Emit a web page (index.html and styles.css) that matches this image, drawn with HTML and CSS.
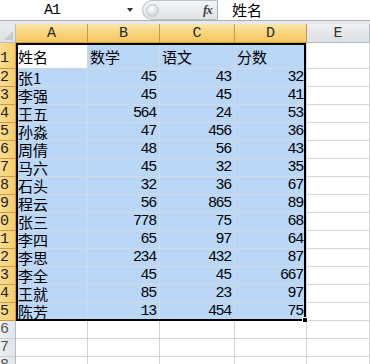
FILE: index.html
```html
<!DOCTYPE html>
<html lang="zh">
<head>
    <meta charset="UTF-8">
    <title>Sheet1</title>
    <link rel="stylesheet" href="styles.css">
</head>
<body>
    <div class="formula-bar">
        <div class="name-box">
            <span class="name-text">A1</span>
            <span class="drop-arrow"></span>
        </div>
        <div class="splitter">
            <span class="knob"></span>
            <span class="fx">fx</span>
        </div>
        <div class="formula-input">姓名</div>
    </div>
    <div class="stripe"></div>

    <div class="sheet" id="sheet">
        <div class="corner"><span class="corner-tri"></span></div>
        <div class="col-head sel">A</div>
        <div class="col-head sel">B</div>
        <div class="col-head sel">C</div>
        <div class="col-head sel">D</div>
        <div class="col-head">E</div>
    </div>

    <script>
        // Data for the selected range A1:D15
        const rows = [
            ['姓名', '数学', '语文', '分数'],
            ['张1', 45, 43, 32],
            ['李强', 45, 45, 41],
            ['王五', 564, 24, 53],
            ['孙淼', 47, 456, 36],
            ['周倩', 48, 56, 43],
            ['马六', 45, 32, 35],
            ['石头', 32, 36, 67],
            ['程云', 56, 865, 89],
            ['张三', 778, 75, 68],
            ['李四', 65, 97, 64],
            ['李思', 234, 432, 87],
            ['李全', 45, 45, 667],
            ['王就', 85, 23, 97],
            ['陈芳', 13, 454, 75]
        ];
        const totalRows = 18;
        const sheet = document.getElementById('sheet');

        function addCell(cls, text) {
            const cell = document.createElement('div');
            cell.className = cls;
            if (text !== undefined) cell.textContent = text;
            sheet.appendChild(cell);
        }

        for (let r = 0; r < totalRows; r++) {
            const data = rows[r];
            const inRange = !!data;
            addCell('row-head' + (inRange ? ' sel' : '') + (r === 0 ? ' first' : ''), r + 1);
            for (let c = 0; c < 5; c++) {
                let cls = 'cell' + (r === 0 ? ' first' : '');
                let value = '';
                if (inRange && c < 4) {
                    value = data[c];
                    if (!(r === 0 && c === 0)) cls += ' hl';
                    if (typeof value === 'number') cls += ' num';
                }
                addCell(cls, value);
            }
        }

        // Selection outline and fill handle
        const outline = document.createElement('div');
        outline.className = 'selection';
        sheet.appendChild(outline);
        const handle = document.createElement('div');
        handle.className = 'fill-handle';
        sheet.appendChild(handle);
    </script>
</body>
</html>
```

FILE: styles.css
```css
body {
    margin: 0;
    width: 370px;
    height: 364px;
    overflow: hidden;
    background-color: #ffffff;
    font-family: "Noto Sans CJK SC", sans-serif;
    color: #000;
}
.formula-bar {
    display: flex;
    height: 20px;
    border-bottom: 1px solid #a9b0b8;
    background-color: #ffffff;
}
.name-box {
    width: 142px;
    display: flex;
    align-items: center;
}
.name-text {
    font-family: "Liberation Mono", monospace;
    font-size: 15px;
    margin-left: 44px;
    letter-spacing: -1px;
}
.drop-arrow {
    margin-left: 67px;
    width: 0;
    height: 0;
    border-left: 3px solid transparent;
    border-right: 3px solid transparent;
    border-top: 4px solid #333;
}
.splitter {
    width: 76px;
    display: flex;
    align-items: center;
    background: linear-gradient(#f4f5f7, #dfe2e6);
    border-radius: 10px 0 0 10px;
    border: 1px solid #bcc2c9;
    border-right: 1px solid #a9b0b8;
    box-sizing: border-box;
    height: 20px;
}
.knob {
    width: 11px;
    height: 11px;
    margin-left: 3px;
    border-radius: 50%;
    background: radial-gradient(circle at 40% 35%, #ffffff, #d3d6da 70%);
    border: 1px solid #c3c7cc;
}
.fx {
    margin-left: 44px;
    font-family: "Liberation Serif", serif;
    font-style: italic;
    font-weight: bold;
    font-size: 13px;
    color: #444;
    letter-spacing: -1px;
}
.formula-input {
    flex: 1;
    padding-left: 14px;
    font-size: 15px;
    line-height: 20px;
}
.stripe {
    height: 3px;
    background-color: #e6e8eb;
}
.sheet {
    position: relative;
    display: grid;
    grid-template-columns: 16px 72px 72px 75px 72px 1fr;
    grid-template-rows: 19px 26px repeat(17, 18px);
}
.sheet > div {
    box-sizing: border-box;
    border-right: 1px solid #d4d4d4;
    border-bottom: 1px solid #d4d4d4;
    overflow: hidden;
    white-space: nowrap;
}
.corner {
    position: relative;
    background: linear-gradient(#eaecef, #dcdfe3);
    border-right-color: #b8bec6 !important;
    border-bottom-color: #b8bec6 !important;
}
.corner-tri {
    position: absolute;
    right: 2px;
    bottom: 2px;
    width: 0;
    height: 0;
    border-left: 9px solid transparent;
    border-bottom: 9px solid #c6cace;
}
.col-head {
    display: flex;
    align-items: center;
    justify-content: center;
    font-family: "Liberation Mono", monospace;
    font-size: 15px;
    color: #333;
    background: linear-gradient(#eef0f2, #dcdfe3);
    border-right-color: #b4bcc6 !important;
    border-bottom-color: #b4bcc6 !important;
}
.col-head.sel {
    background: linear-gradient(#fbe7ae, #f8d67f 45%, #f5c85e);
    border-right-color: #c99a4d !important;
    border-bottom-color: #e2953a !important;
    color: #2a2a2a;
}
.row-head {
    display: flex;
    align-items: center;
    justify-content: flex-end;
    padding-right: 6px;
    font-family: "Liberation Mono", monospace;
    font-size: 15px;
    color: #555;
    background: linear-gradient(90deg, #eef0f2, #e2e5e9);
    border-right-color: #b4bcc6 !important;
    border-bottom-color: #c8ced6 !important;
}
.row-head.sel {
    background: linear-gradient(90deg, #f9dc93, #f6cd6a);
    border-right-color: #e2953a !important;
    border-bottom-color: #c99a4d !important;
    color: #222;
}
.row-head.first {
    align-items: flex-end;
    padding-bottom: 1px;
}
.cell {
    display: flex;
    align-items: flex-end;
    padding: 0 2px;
    font-size: 15px;
    line-height: 16px;
}
.cell.hl {
    background-color: #bad7f7;
    border-right-color: #d3d9e0 !important;
    border-bottom-color: #d3d9e0 !important;
}
.cell.num {
    justify-content: flex-end;
    padding-right: 3px;
    font-family: "Liberation Mono", monospace;
    font-size: 15px;
    letter-spacing: -1.3px;
}
.cell.first {
    padding-bottom: 3px;
}
.sheet > .selection {
    position: absolute;
    left: 16px;
    top: 19px;
    width: 290px;
    height: 278px;
    border: 2px solid #000;
    pointer-events: none;
}
.sheet > .fill-handle {
    position: absolute;
    left: 302px;
    top: 293px;
    width: 6px;
    height: 6px;
    background-color: #000;
    border: 1px solid #fff;
}
```
